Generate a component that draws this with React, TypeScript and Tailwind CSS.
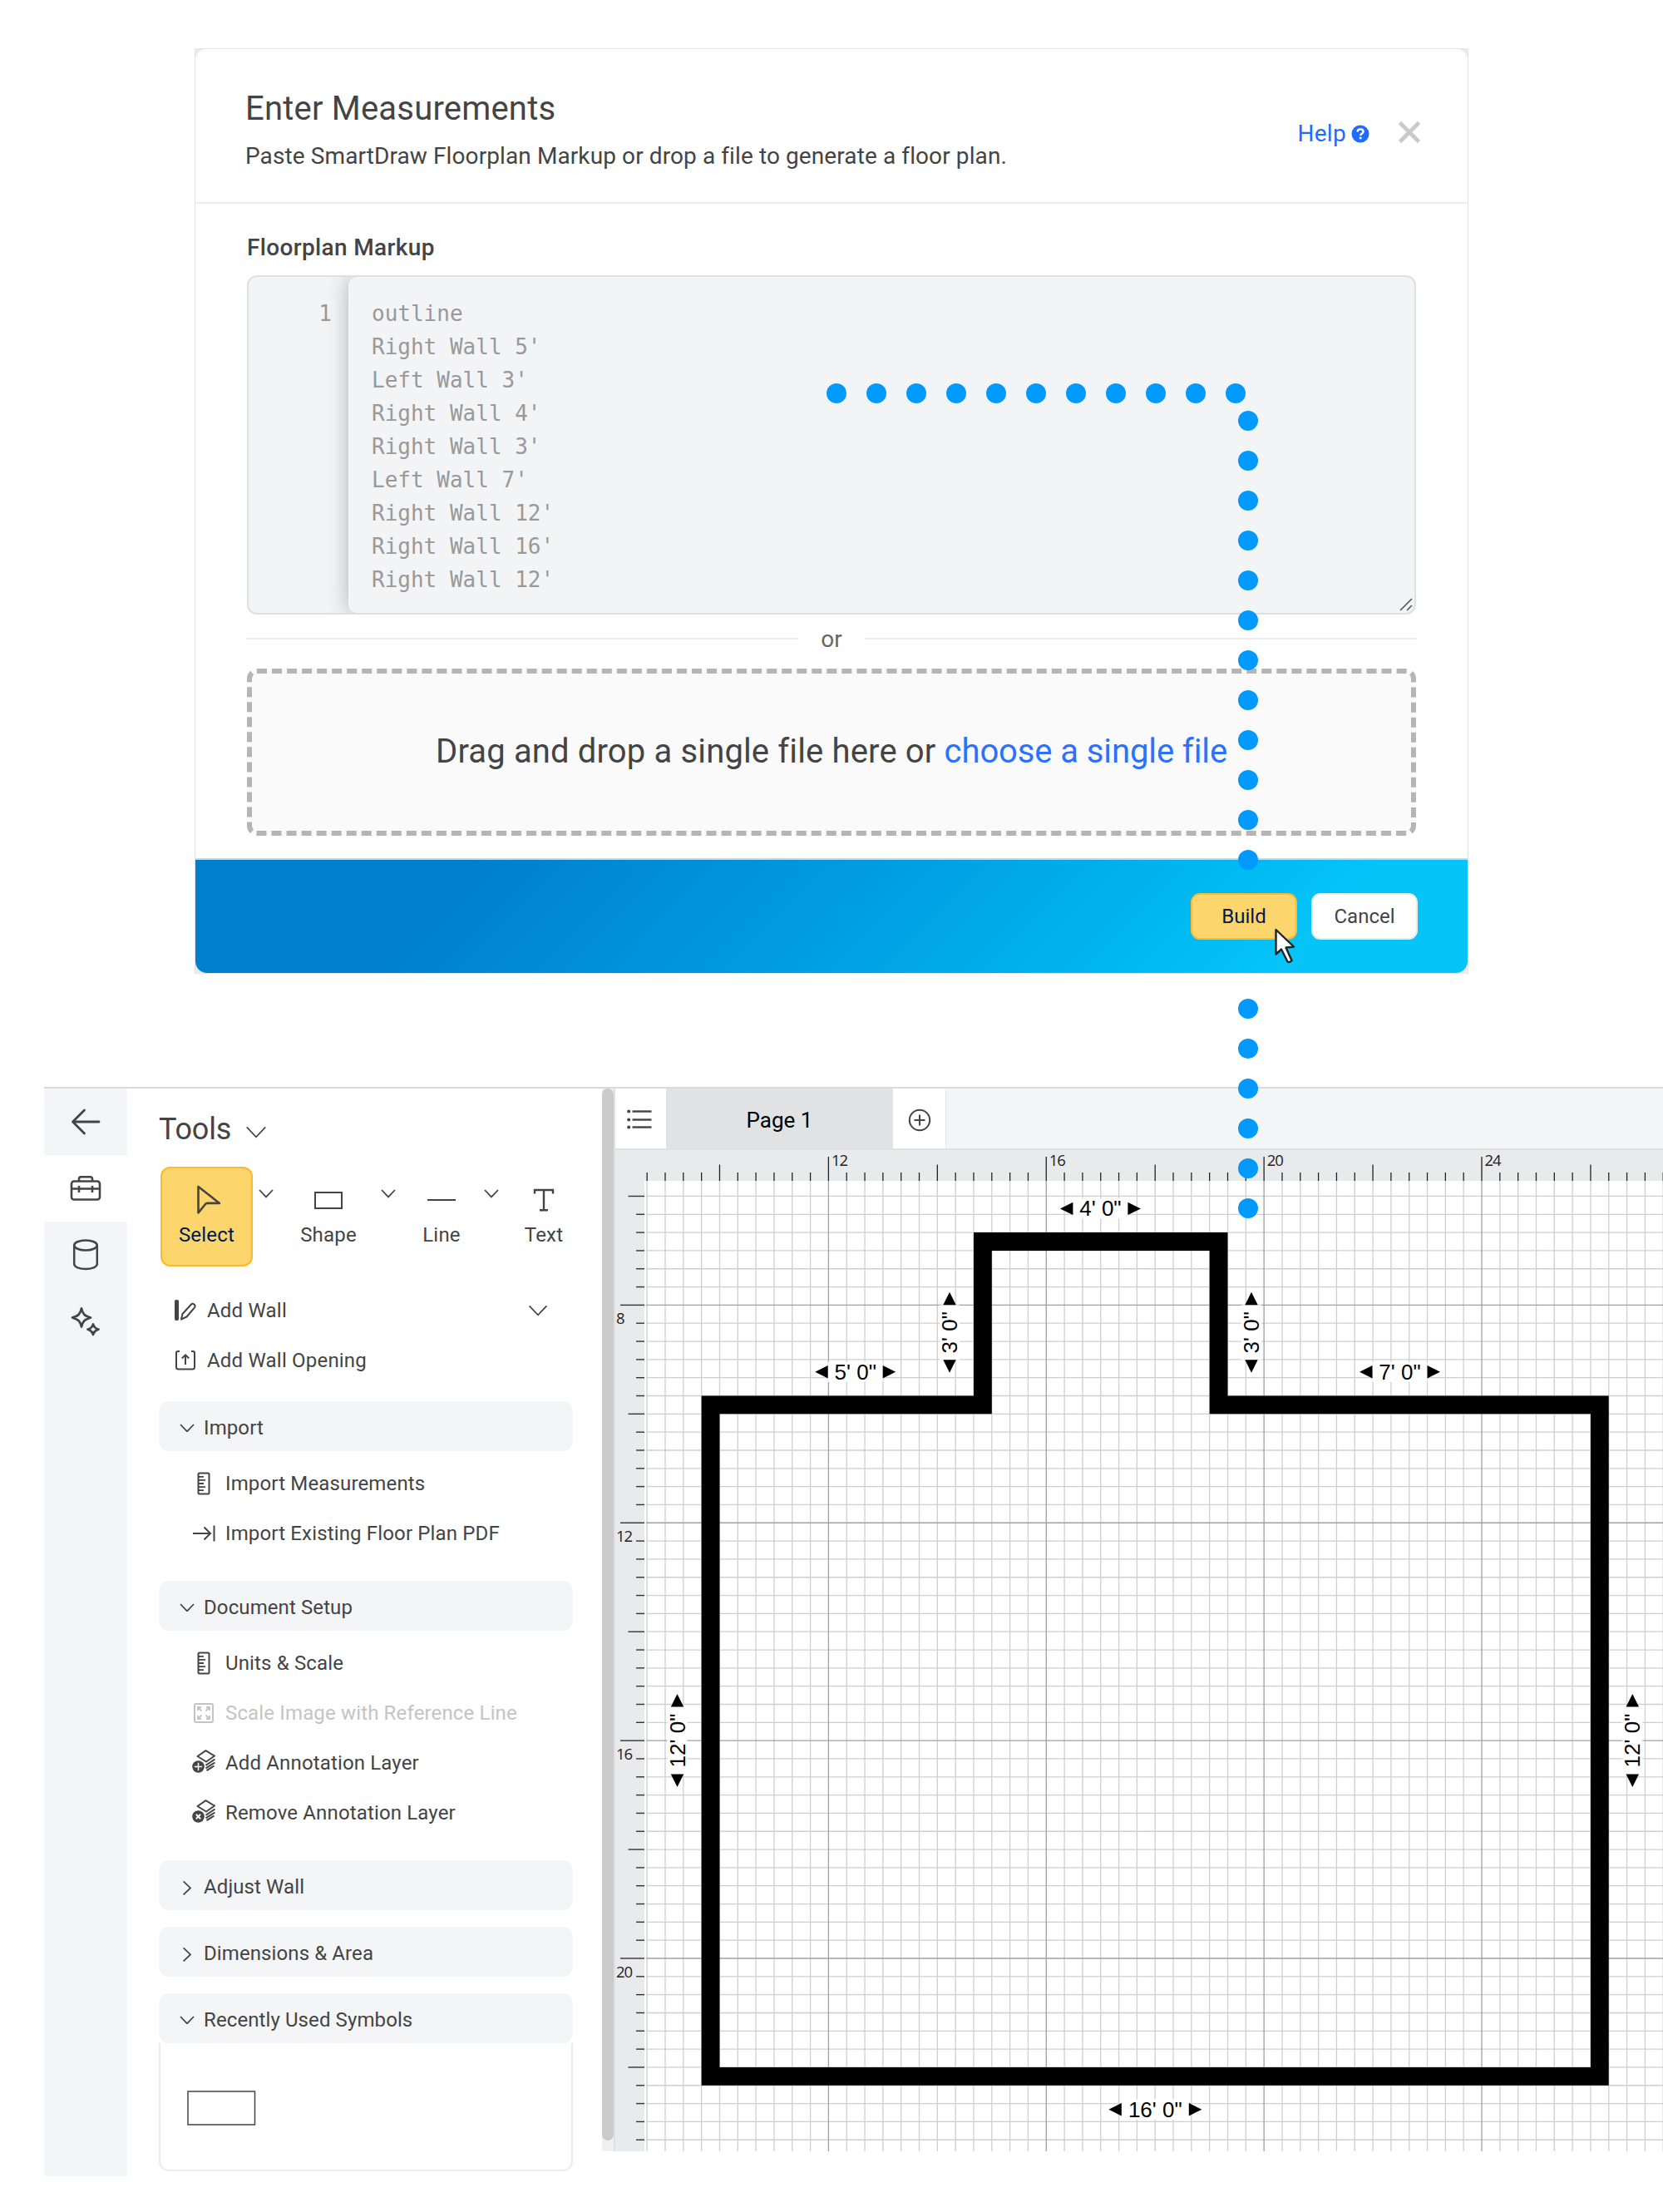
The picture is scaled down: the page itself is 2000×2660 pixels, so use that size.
import type { ReactNode } from 'react';

const markupLines = [
  'outline',
  "Right Wall 5'",
  "Left Wall 3'",
  "Right Wall 4'",
  "Right Wall 3'",
  "Left Wall 7'",
  "Right Wall 12'",
  "Right Wall 16'",
  "Right Wall 12'",
];

function MeasurementsDialog() {
  return (
    <div className="ml-[234px] mt-[58px] h-[1113px] w-[1532px] border border-[#e4e4e6] bg-[#ececee]">
      <div className="flex h-full flex-col overflow-hidden rounded-[14px] bg-white">
        <div className="flex h-[186px] shrink-0 justify-between border-b-2 border-[#ececec] pl-[60px] pr-[56px]">
          <div className="pt-[48px]">
            <h1 className="text-[40px] leading-[48px] tracking-[0.2px]">Enter Measurements</h1>
            <p className="mt-[13px] text-[28px] leading-[40px] tracking-[0.1px]">
              Paste SmartDraw Floorplan Markup or drop a file to generate a floor plan.
            </p>
          </div>
          <div className="flex h-[200px] items-center">
            <a className="flex items-center pt-[3px] text-[28px] leading-[40px] tracking-[0.3px] text-[#1f6bff]">
              Help
              <svg className="ml-[6px]" width="22" height="22" viewBox="0 0 22 22">
                <circle cx="11" cy="11" r="10.5" fill="#1f6bff" />
                <path d="M7.6 8.6c0-2 1.5-3.2 3.5-3.2s3.5 1.2 3.5 2.9c0 2.4-3.4 2.3-3.4 4.6" fill="none" stroke="#fff" strokeWidth="2.4" />
                <rect x="9.8" y="14.6" width="2.7" height="2.7" fill="#fff" />
              </svg>
            </a>
            <svg className="ml-[34px]" width="28" height="28" viewBox="0 0 28 28" stroke="#cacaca" strokeWidth="4.6">
              <path d="M2.5 2.5l23 23M25.5 2.5l-23 23" />
            </svg>
          </div>
        </div>

        <div className="flex grow flex-col px-[62px] pt-[33px]">
          <h2 className="mb-[13px] text-[28px] font-medium leading-[40px] tracking-[0.35px]">Floorplan Markup</h2>
          <div className="relative flex h-[408px] shrink-0 overflow-hidden rounded-xl border-2 border-[#dfe0e6] bg-[#f3f4f6] font-['DejaVu_Sans_Mono',monospace] text-[26px] leading-[40px] text-[#999]">
            <div className="w-[120px] shrink-0 pr-[20px] pt-6 text-right">1</div>
            <div className="grow rounded-[10px] bg-[#f3f4f6] pl-[28px] pt-6 shadow-[0_0_26px_rgba(0,0,0,0.28)]">
              {markupLines.map((line, i) => (
                <div key={i}>{line}</div>
              ))}
            </div>
            <svg className="absolute bottom-[1px] right-[1px]" width="18" height="18" stroke="#555" strokeWidth="1.6">
              <path d="M2 16L16 2M10 16l6-6" />
            </svg>
          </div>
          <div className="mb-[7px] flex h-[58px] shrink-0 items-center gap-7 text-[28px] text-[#666]">
            <div className="h-0.5 grow bg-[#ececec]" />
            <span className="pt-0.5 leading-[40px]">or</span>
            <div className="h-0.5 grow bg-[#ececec]" />
          </div>
          <div className="flex h-[201px] shrink-0 items-center justify-center rounded-xl border-[6px] border-dashed border-[#b5b5b5] bg-[#fafafa] text-[40px]">
            <p className="whitespace-pre pb-px tracking-[0.15px]">
              Drag and drop a single file here or <a className="tracking-[-0.1px] text-[#2b71ff]">choose a single file</a>
            </p>
          </div>
        </div>

        <div className="flex h-[138px] shrink-0 items-center justify-end gap-[17px] border-t-2 border-[#d3d4da] bg-[linear-gradient(135deg,#007fcf_20%,#009de2_50%,#00bcf2_78%,#06c3f8_86%)] bg-origin-border pr-[60px] text-[24px]">
          <button className="h-14 w-32 rounded-[11px] border-2 border-[#fdb92f] bg-[#fcd66c] text-[#001a50]">Build</button>
          <button className="h-14 w-32 rounded-[11px] border-2 border-[#eaeaea] bg-white">Cancel</button>
        </div>
      </div>
    </div>
  );
}

function Chevron({ width = 16, className = '' }: { width?: number; className?: string }) {
  return (
    <svg className={`shrink-0 ${className}`} width={width + 2} height={width * 0.55 + 2} viewBox="0 0 18 10.8" fill="none" stroke="#444" strokeWidth={28 / width}>
      <path d="M1 1l8 8.4L17 1" />
    </svg>
  );
}

function SideRail() {
  return (
    <div className="flex h-[1308px] w-[100px] shrink-0 flex-col bg-[#f4f5f7] text-[#444]">
      <div className="flex h-20 items-center justify-center">
        <svg width="36" height="32" viewBox="0 0 36 32" fill="none" stroke="currentColor" strokeWidth="2.8" strokeLinecap="round" strokeLinejoin="round">
          <path d="M34 16H3M16.5 2L2.5 16l14 14" />
        </svg>
      </div>
      <div className="flex h-20 items-center justify-center bg-white">
        <svg width="38" height="32" viewBox="0 0 38 32" fill="none" stroke="currentColor" strokeWidth="2.6" strokeLinejoin="round">
          <rect x="2" y="7.5" width="34" height="22" rx="3" />
          <path d="M11 7V4.5Q11 2.2 13.5 2.2h11Q27 2.2 27 4.5V7M2 16.5h34M11 13v8M27 13v8" />
        </svg>
      </div>
      <div className="flex h-20 items-center justify-center">
        <svg width="32" height="40" viewBox="0 0 32 40" fill="none" stroke="currentColor" strokeWidth="2.5">
          <ellipse cx="16" cy="8.5" rx="13.8" ry="6" />
          <path d="M2.2 8.5v22.5c0 3.5 6.2 6 13.8 6s13.8-2.5 13.8-6V8.5" />
        </svg>
      </div>
      <div className="flex h-20 items-center justify-center">
        <svg width="36" height="36" viewBox="0 0 36 36" fill="none" stroke="currentColor" strokeWidth="2.8" strokeLinejoin="round">
          <path d="M13 2.5c1.6 6.8 3.5 8.8 11 11-7.5 2.2-9.4 4.2-11 11-1.6-6.8-3.5-8.8-11-11 7.5-2.2 9.4-4.2 11-11z" />
          <path d="M27 21.5c.9 3.4 2.2 5 6.5 6.2-4.3 1.2-5.6 2.8-6.5 6.2-.9-3.4-2.2-5-6.5-6.2 4.3-1.2 5.6-2.8 6.5-6.2z" />
        </svg>
      </div>
    </div>
  );
}

function ToolButton({ label, icon, className }: { label: string; icon: ReactNode; className: string }) {
  return (
    <div className={`flex h-[120px] shrink-0 flex-col items-center ${className}`}>
      <div className="flex h-[76px] items-center justify-center pt-1">{icon}</div>
      <div className="-mt-[10px] leading-[32px] tracking-[0.2px]">{label}</div>
    </div>
  );
}

function SectionHeader({ label, open = true, className = '' }: { label: string; open?: boolean; className?: string }) {
  return (
    <div className={`flex h-[60px] shrink-0 items-center rounded-xl bg-[#f4f5f7] pl-[25px] ${className}`}>
      <Chevron className={open ? 'mt-1' : 'mt-1.5 -rotate-90'} />
      <span className="ml-[11px] pt-[3px] tracking-[0.1px]">{label}</span>
    </div>
  );
}

function Item({ label, icon, disabled = false }: { label: string; icon: ReactNode; disabled?: boolean }) {
  return (
    <div className={`flex h-[60px] items-center pl-[39px] tracking-[0.15px] ${disabled ? 'text-[#c4c4c4]' : ''}`}>
      <span className="flex w-[30px] justify-center">{icon}</span>
      <span className="ml-[11px]">{label}</span>
    </div>
  );
}

function RulerIcon() {
  return (
    <svg width="16" height="28" viewBox="0 0 16 28" fill="none" stroke="currentColor" strokeWidth="2">
      <rect x="1.5" y="1.5" width="13" height="25" rx="1.5" />
      <path d="M2 5.8h6M2 9.9h8M2 14h6M2 18.1h8M2 22.2h6" strokeWidth="1.8" />
    </svg>
  );
}

function LayersIcon({ remove = false }: { remove?: boolean }) {
  return (
    <svg className="-mt-1" width="30" height="30" viewBox="0 0 30 30" fill="none" stroke="currentColor" strokeWidth="2" strokeLinejoin="round">
      <path d="M7.5 9L17.5 2.2 28 8.5 18 15.5z" />
      <path d="M28.5 12.5L17.5 19.8M28.5 16.5L17.5 23.3M27.5 20.5L18.5 26.2" />
      <circle cx="8.5" cy="21.5" r="7.3" fill="currentColor" stroke="none" />
      {remove ? (
        <path d="M5.8 18.8l5.4 5.4M11.2 18.8l-5.4 5.4" stroke="#fff" />
      ) : (
        <path d="M3.8 21.5h9.4M8.5 16.8v9.4" stroke="#fff" strokeWidth="1.5" />
      )}
    </svg>
  );
}

function ToolsPanel() {
  return (
    <div className="flex h-[1308px] w-[571px] shrink-0 flex-col pl-[38px] pr-[35px] text-[24px] leading-[32px]">
      <div className="flex h-[94px] items-center pt-[5px]">
        <span className="pb-0.5 text-[36px] leading-[48px] tracking-[-0.2px]">Tools</span>
        <Chevron width={24} className="ml-[17px] mt-1.5" />
      </div>

      <div className="ml-0.5 flex">
        <ToolButton
          label="Select"
          className="w-[111px] rounded-[12px] bg-[#fcd66c] text-[#001a50] shadow-[inset_0_0_0_2px_#fdb92f]"
          icon={
            <svg className="ml-1" width="30" height="36" viewBox="0 0 30 36" fill="none" stroke="#444" strokeWidth="2.6" strokeLinejoin="round">
              <path d="M2.5 2v31.5l8.500-10.5q.9-1.100 2.200-1.100H28z" />
            </svg>
          }
        />
        <Chevron className="ml-[7px] mt-[27px]" />
        <ToolButton
          label="Shape"
          className="ml-[32px] w-[68px]"
          icon={<div className="h-[21px] w-[34px] border-[2.5px] border-[#444]" />}
        />
        <Chevron className="ml-[29px] mt-[27px]" />
        <ToolButton label="Line" className="ml-[32px] w-[46px]" icon={<div className="h-[2.5px] w-[34px] bg-[#444]" />} />
        <Chevron className="ml-[28px] mt-[27px]" />
        <ToolButton
          label="Text"
          className="ml-[31px] w-[46px]"
          icon={
            <svg width="26" height="30" viewBox="0 0 26 30" fill="none" stroke="#444" strokeWidth="2.4">
              <path d="M2 7.5V3h22v4.5M13 3v24M8 27.3h10" />
            </svg>
          }
        />
      </div>

      <div className="mt-[23px] flex h-[60px] items-center pl-[18px]">
        <svg width="28" height="28" viewBox="0 0 28 28" fill="none" stroke="#444" strokeWidth="2" strokeLinejoin="round">
          <rect x="1" y="1" width="5" height="25" rx="2" fill="#444" stroke="none" />
          <path d="M9 24.5l1.500-6.500L21 6.500c1.800-2 5.800.8 4.200 3.600L15.500 21.500z" />
        </svg>
        <span className="ml-[12px] tracking-[0.2px]">Add Wall</span>
        <Chevron width={22} className="ml-auto mr-[30px]" />
      </div>
      <div className="mb-[19px] flex h-[60px] items-center pl-[18px]">
        <svg width="28" height="26" viewBox="0 0 28 26" fill="none" stroke="#444" strokeWidth="2">
          <path d="M7 2H5Q3 2 3 4v17q0 2.500 2.500 2.500h17Q25 23.500 25 21V4q0-2-2-2h-2M14 18V6.500M9.800 10.500L14 6.300l4.200 4.200" />
        </svg>
        <span className="ml-[12px] tracking-[0.2px]">Add Wall Opening</span>
      </div>

      <SectionHeader label="Import" />
      <div className="pb-[27px] pt-[9px]">
        <Item label="Import Measurements" icon={<RulerIcon />} />
        <Item
          label="Import Existing Floor Plan PDF"
          icon={
            <svg width="28" height="22" viewBox="0 0 28 22" fill="none" stroke="currentColor" strokeWidth="2">
              <path d="M1 11h21M14.5 3.500L22 11l-7.500 7.500M26.500 1.500v19" />
            </svg>
          }
        />
      </div>

      <SectionHeader label="Document Setup" />
      <div className="pb-[27px] pt-[9px]">
        <Item label="Units & Scale" icon={<RulerIcon />} />
        <Item
          label="Scale Image with Reference Line"
          disabled
          icon={
            <svg width="26" height="26" viewBox="0 0 26 26" fill="none" stroke="currentColor" strokeWidth="2">
              <rect x="2" y="2" width="22" height="22" rx="2" />
              <path d="M10.5 10.5L6.5 6.5M6 10V6h4M15.5 10.5l4-4M16 6h4v4M10.5 15.5l-4 4M6 16v4h4M15.5 15.5l4 4M16 20h4v-4" strokeWidth="1.8" />
            </svg>
          }
        />
        <Item label="Add Annotation Layer" icon={<LayersIcon />} />
        <Item label="Remove Annotation Layer" icon={<LayersIcon remove />} />
      </div>

      <SectionHeader label="Adjust Wall" open={false} className="mb-5" />
      <SectionHeader label="Dimensions & Area" open={false} className="mb-5" />
      <SectionHeader label="Recently Used Symbols" />
      <div className="h-[154px] shrink-0 rounded-b-xl border-2 border-t-0 border-[#ececec] pl-8 pt-[57px]">
        <svg className="block" width="83" height="42" fill="none" stroke="#444" strokeWidth="1.5">
          <rect x="1" y="1" width="80.5" height="40" />
        </svg>
      </div>
    </div>
  );
}

// One grid cell is a third of a foot
const CELL = 21.8225;
const ORIGIN_X = 256.4;
const ORIGIN_Y = 186.4;
const gx = (k: number) => ORIGIN_X + k * CELL;
const gy = (j: number) => ORIGIN_Y + j * CELL;
const columns = Array.from({ length: 57 }, (_, i) => i - 10);
const rows = Array.from({ length: 53 }, (_, i) => i - 6);

const wallPoints = [
  [-6.5, 5.5],
  [8.5, 5.5],
  [8.5, -3.5],
  [21.5, -3.5],
  [21.5, 5.5],
  [42.5, 5.5],
  [42.5, 42.5],
  [-6.5, 42.5],
]
  .map(([k, j]) => `${gx(k)},${gy(j)}`)
  .join(' ');

const dimensions = [
  { text: `4' 0"`, x: 583.4, y: 70.4, half: 48.5 },
  { text: `5' 0"`, x: 288.7, y: 266.7, half: 48.5 },
  { text: `7' 0"`, x: 943.5, y: 266.7, half: 48.5 },
  { text: `16' 0"`, x: 649.3, y: 1153.7, half: 56 },
  { text: `3' 0"`, x: 402, y: 219.3, half: 48.5, vertical: true },
  { text: `3' 0"`, x: 765, y: 219.3, half: 48.5, vertical: true },
  { text: `12' 0"`, x: 74.5, y: 710, half: 56, vertical: true },
  { text: `12' 0"`, x: 1223.3, y: 710, half: 56, vertical: true },
];

// Ruler ticks get longer every 2 ft and again every 4 ft
function tickLength(n: number) {
  if (n % 12 === 0) return 29;
  return n % 6 === 0 ? 19.5 : 10;
}

function Canvas() {
  return (
    <svg className="block" width="1260" height="1204" viewBox="0 0 1260 1204">
      <rect width="1260" height="1204" fill="#fff" />
      <rect width="1260" height="37" fill="#e9eaec" />
      <rect width="35" height="1204" fill="#e9eaec" />

      <g stroke="#cfcfcf" strokeWidth="1.3">
        {columns.filter((k) => k % 12 !== 0).map((k) => (
          <line key={k} x1={gx(k)} x2={gx(k)} y1="37" y2="1204" />
        ))}
        {rows.filter((j) => j % 12 !== 0).map((j) => (
          <line key={j} x1="37" x2="1260" y1={gy(j)} y2={gy(j)} />
        ))}
      </g>
      <g stroke="#a0a0a0" strokeWidth="1.3">
        {columns.filter((k) => k % 12 === 0).map((k) => (
          <line key={k} x1={gx(k)} x2={gx(k)} y1="37" y2="1204" />
        ))}
        {rows.filter((j) => j % 12 === 0).map((j) => (
          <line key={j} x1="37" x2="1260" y1={gy(j)} y2={gy(j)} />
        ))}
      </g>

      <g stroke="#222" strokeWidth="1.3">
        {columns.map((k) => (
          <line key={k} x1={gx(k)} x2={gx(k)} y1={37 - tickLength(k)} y2="37" />
        ))}
      </g>
      <g stroke="#333" strokeWidth="1.4">
        {rows.map((j) => (
          <line key={j} x1={35 - tickLength(j)} x2="35" y1={gy(j)} y2={gy(j)} />
        ))}
      </g>
      <g className="font-['Open_Sans',sans-serif] text-[18.5px] tracking-[-1px]" fill="#222">
        {[12, 16, 20, 24].map((n, i) => (
          <text key={n} x={gx(i * 12) + 3.5} y="18.7">{n}</text>
        ))}
        {[8, 12, 16, 20].map((n, i) => (
          <text key={n} x="1" y={gy(i * 12) + 22.7}>{n}</text>
        ))}
      </g>

      <polygon points={wallPoints} fill="none" stroke="#000" strokeWidth={CELL} />

      {dimensions.map((d, i) => (
        <g key={i} transform={`translate(${d.x} ${d.y})${d.vertical ? ' rotate(-90)' : ''}`}>
          <rect x={15.5 - d.half} y="-12" width={2 * d.half - 31} height="24" fill="#fff" />
          <path d={`M${-d.half} 0l15.5-7.7v15.4zM${d.half} 0l-15.5-7.7v15.4z`} />
          <text className="font-['Liberation_Sans',Arial,sans-serif] text-[26px]" textAnchor="middle" y="9">
            {d.text}
          </text>
        </g>
      ))}
    </svg>
  );
}

function Workspace() {
  return (
    <div className="w-[1262px] shrink-0">
      <div className="flex h-[74px] border-b-2 border-l-2 border-[#e0e1e2] bg-[#f4f5f7]">
        <div className="flex w-[61px] items-center justify-center bg-white pr-[3px] pt-0.5">
          <svg width="30" height="24" viewBox="0 0 30 24" fill="#444">
            {[2, 12, 21].map((y) => (
              <g key={y}>
                <circle cx="2.2" cy={y + 0.5} r="2" />
                <rect x="6.5" y={y - 0.7} width="23" height="2.4" />
              </g>
            ))}
          </svg>
        </div>
        <div className="flex w-[273px] items-center justify-center bg-[#e1e2e3] pt-1 text-[26px] text-black">Page 1</div>
        <div className="flex w-[64px] items-center justify-center border-r border-[#e4e5e6] bg-white">
          <svg className="mt-1" width="28" height="28" viewBox="0 0 28 28" fill="none" stroke="#444" strokeWidth="2">
            <circle cx="14" cy="14" r="12.2" />
            <path d="M7.5 14h13M14 7.5v13" />
          </svg>
        </div>
      </div>
      <div className="border-l-2 border-[#dfe0e2]">
        <Canvas />
      </div>
    </div>
  );
}

const dots: [number, number][] = [
  ...Array.from({ length: 11 }, (_, i): [number, number] => [1006 + i * 48, 473]),
  ...Array.from({ length: 12 }, (_, i): [number, number] => [1501, 506 + i * 48]),
  ...Array.from({ length: 6 }, (_, i): [number, number] => [1501, 1213 + i * 48]),
];

export default function App() {
  return (
    <div className="relative flow-root h-[2660px] w-[2000px] overflow-hidden bg-white font-['Roboto',sans-serif] text-[#444]">
      <MeasurementsDialog />

      <div className="ml-[53px] mt-[136px] flex h-[1310px] w-[1947px] items-start border-t-2 border-[#d9dadb]">
        <SideRail />
        <ToolsPanel />
        <div className="h-[1278px] w-[14px] shrink-0 bg-[#f0f0f0]">
          <div className="h-[1265px] rounded-full bg-[#cacaca]" />
        </div>
        <Workspace />
      </div>

      {/* Guide trail from the markup to the finished plan */}
      <svg className="pointer-events-none absolute left-0 top-0" width="2000" height="2660">
        <g fill="#0099ff">
          {dots.map(([x, y]) => (
            <circle key={`${x}-${y}`} cx={x} cy={y} r="12" />
          ))}
        </g>
        <path
          d="M1534.5 1118v29.5l6.500-6 7.500 15q2.500 1.500 5-1.500l-7-15.500 9.500-1z"
          fill="#fff"
          stroke="#222"
          strokeWidth="2.4"
          strokeLinejoin="round"
        />
      </svg>
    </div>
  );
}
